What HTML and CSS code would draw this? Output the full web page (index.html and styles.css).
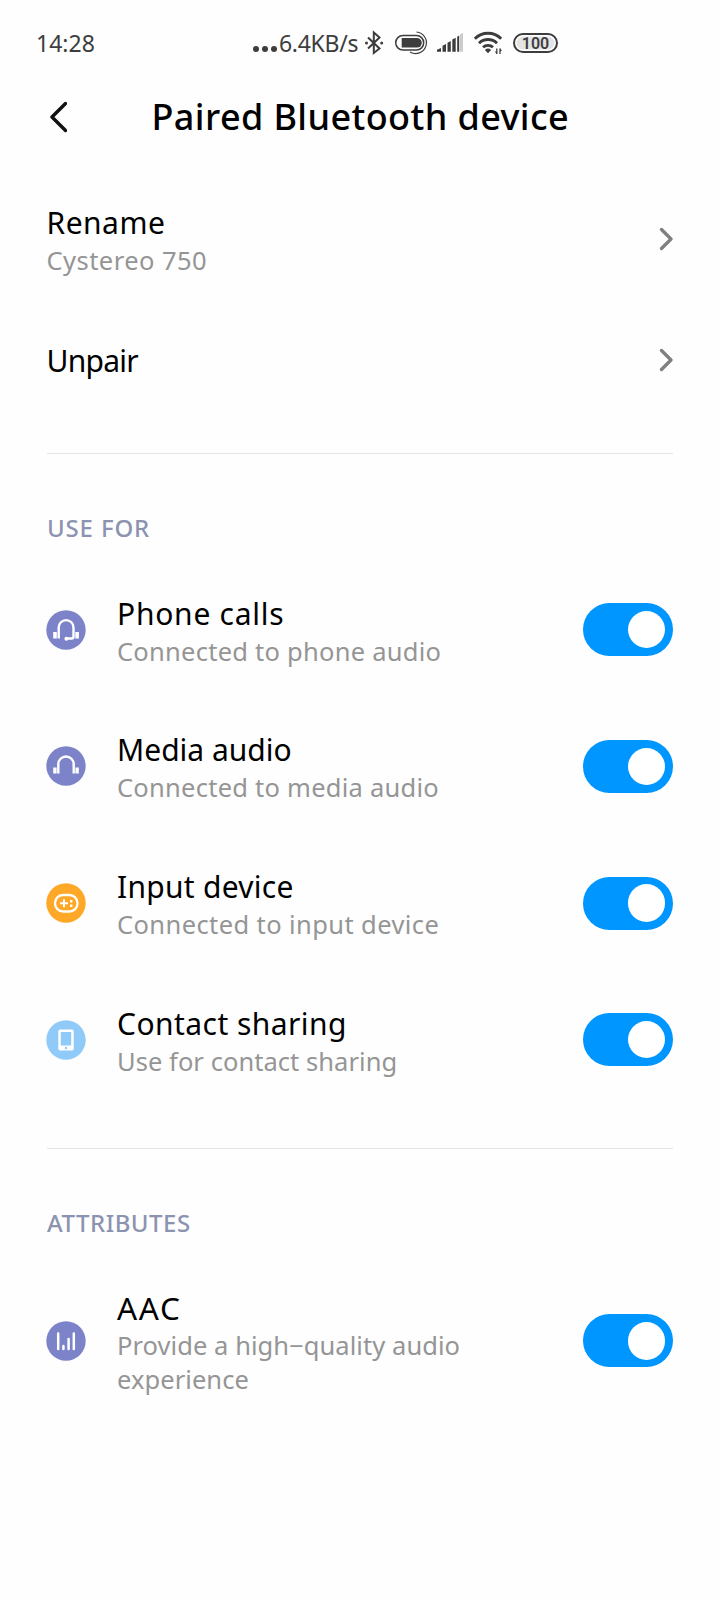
FILE: index.html
```html
<!DOCTYPE html>
<html lang="en">
<head>
<meta charset="utf-8">
<title>Paired Bluetooth device</title>
<link rel="stylesheet" href="styles.css">
</head>
<body>
<div class="screen">
  <div class="statusbar">
    <span class="clock">14:28</span>
    <div class="status">
      <svg class="dots" width="24" height="32" viewBox="0 0 24 32"><g fill="#3d3d3d"><circle cx="3" cy="22" r="3"/><circle cx="12" cy="22" r="3"/><circle cx="21" cy="22" r="3"/></g></svg>
      <span class="speed">6.4KB/s</span>
      <svg class="bt" width="20" height="32" viewBox="364 27 20 32"><path d="M368 37.500 L379.500 48.500 L373.800 53 V32.500 L379.500 37.500 L368 48.500" fill="none" stroke="#3d3d3d" stroke-width="2"/><circle cx="366.500" cy="43" r="1.500" fill="#3d3d3d"/><circle cx="381.700" cy="43" r="1.500" fill="#3d3d3d"/></svg>
      <svg class="batt2" width="34" height="32" viewBox="394 27 34 32"><rect x="395.700" y="35.500" width="28" height="14.500" rx="7.250" fill="none" stroke="#3d3d3d" stroke-width="1.500"/><path d="M401.700 38h15.300a4.800 4.800 0 0 1 0 9.600h-15.300z" fill="#3d3d3d"/><path d="M416.500 32a10.800 10.800 0 1 1-6.500 20" fill="none" stroke="#3d3d3d" stroke-width="1.200"/></svg>
      <svg class="signal" width="28" height="32" viewBox="436 27 28 32"><g fill="#3d3d3d"><path d="M437 51.700v-2l4-1.700v3.700z"/><path d="M442.500 51.700v-6l3.500-1.700v7.700z"/><path d="M447.500 51.700v-9l3.300-1.800v10.800z"/><path d="M452.300 51.700v-12.200l3.400-1.800v14z"/><path d="M457.200 51.700v-15l2-1.200v16.200z"/></g><path d="M460 51.700v-17.200l3-1.700v18.900z" fill="#cbcbcb"/></svg>
      <svg class="wifi" width="30" height="32" viewBox="473 27 30 32"><g fill="none" stroke="#3d3d3d" stroke-width="2.800"><path d="M474.800 38.800a18.500 18.500 0 0 1 26.400 0"/><path d="M479 43.200a12.800 12.800 0 0 1 18 0"/><path d="M483 47.300a7.200 7.200 0 0 1 10 0"/></g><path d="M484.900 50a4.600 4.600 0 0 1 6.200 0l-3.100 3.200z" fill="#3d3d3d"/><path d="M496.800 48.500v5.500M500 48.500v5.500" stroke="#3d3d3d" stroke-width="1.300"/><path d="M494.800 51.500h2v2.800zM502 51h-2v-2.800z" fill="#3d3d3d"/></svg>
      <span class="battery">100</span>
    </div>
  </div>

  <div class="titlebar">
    <svg class="back" width="20" height="34" viewBox="0 0 20 34"><path d="M18.500 3.500 L5 17 L18.500 30.500" fill="none" stroke="#111" stroke-width="3.400" stroke-linecap="round" stroke-linejoin="round"/></svg>
    <h1 class="title">Paired Bluetooth device</h1>
  </div>

  <div class="row">
    <div class="text"><div class="name rename">Rename</div><div class="sub alias">Cystereo 750</div></div>
    <svg class="chev" width="14" height="24" viewBox="0 0 14 24"><path d="M2.500 2.500 L12 12 L2.500 21.500" fill="none" stroke="#808080" stroke-width="3.300" stroke-linecap="round" stroke-linejoin="round"/></svg>
  </div>
  <div class="row short">
    <div class="text"><div class="name unpair">Unpair</div></div>
    <svg class="chev" width="14" height="24" viewBox="0 0 14 24"><path d="M2.500 2.500 L12 12 L2.500 21.500" fill="none" stroke="#808080" stroke-width="3.300" stroke-linecap="round" stroke-linejoin="round"/></svg>
  </div>

  <div class="section use-for">USE FOR</div>
  <div class="row calls">
    <svg class="icon" viewBox="0 0 40 40"><circle cx="20" cy="20" r="19.700" fill="#7c83c8"/><path d="M12.700 28.500V17.500a7.400 7.400 0 0 1 14.800 0v9a2 2 0 0 1-2 2h-5" fill="none" stroke="#fff" stroke-width="2.400"/><circle cx="20.400" cy="28.700" r="2" fill="#fff"/><path d="M7.200 22h3.600v6.500H7.200zM29.300 22h3.600v6.500h-3.600z" fill="#fff"/></svg>
    <div class="text"><div class="name">Phone calls</div><div class="sub">Connected to phone audio</div></div>
    <div class="toggle"><span class="knob"></span></div>
  </div>
  <div class="row media">
    <svg class="icon" viewBox="0 0 40 40"><circle cx="20" cy="20" r="19.700" fill="#7c83c8"/><path d="M12.300 27.500V18.200a7.700 7.700 0 0 1 15.400 0v9.300" fill="none" stroke="#fff" stroke-width="2.400"/><path d="M7.200 21.500h3.400v6H7.200zM29.400 21.500h3.400v6h-3.400z" fill="#fff"/></svg>
    <div class="text"><div class="name">Media audio</div><div class="sub">Connected to media audio</div></div>
    <div class="toggle"><span class="knob"></span></div>
  </div>
  <div class="row input">
    <svg class="icon" viewBox="0 0 40 40"><circle cx="20" cy="20" r="19.700" fill="#ffa726"/><rect x="9" y="12" width="22.500" height="16.500" rx="8" fill="none" stroke="#fff" stroke-width="2.300"/><path d="M14 20.300h8M18 16.300v8" stroke="#fff" stroke-width="2"/><path d="M24 17h2.400v2.400H24zM24 21.500h2.400v2.400H24z" fill="#fff"/></svg>
    <div class="text"><div class="name">Input device</div><div class="sub">Connected to input device</div></div>
    <div class="toggle"><span class="knob"></span></div>
  </div>
  <div class="row contact">
    <svg class="icon" viewBox="0 0 40 40"><circle cx="20" cy="20" r="19.700" fill="#90caf9"/><path fill-rule="evenodd" d="M14 9.500h12a1.700 1.700 0 0 1 1.700 1.700v17.600a1.700 1.700 0 0 1-1.700 1.700h-12a1.700 1.700 0 0 1-1.700-1.700V11.200A1.700 1.700 0 0 1 14 9.500zM14.800 12v13.500h10.400V12z" fill="#fff"/><circle cx="20" cy="28" r="1.200" fill="#90caf9"/></svg>
    <div class="text"><div class="name">Contact sharing</div><div class="sub">Use for contact sharing</div></div>
    <div class="toggle"><span class="knob"></span></div>
  </div>

  <div class="section attributes">ATTRIBUTES</div>
  <div class="row tall aac">
    <svg class="icon" viewBox="0 0 40 40"><circle cx="20" cy="20" r="19.700" fill="#7c83c8"/><path d="M12.200 12.500v15.500M17.400 25v3M22.600 18v10M27.800 12.500v15.500" stroke="#fff" stroke-width="2.500" stroke-linecap="round"/></svg>
    <div class="text"><div class="name">AAC</div><div class="sub">Provide a high−quality audio<br>experience</div></div>
    <div class="toggle"><span class="knob"></span></div>
  </div>
</div>
</body>
</html>
```

FILE: styles.css
```css
* { box-sizing: border-box; }
body { margin: 0; background: #fefefe; font-family: "Noto Sans", sans-serif; color: #000; }
.screen { width: 720px; height: 1600px; overflow: hidden; }
.statusbar { display: flex; height: 86px; padding: 27px 0 0 36px; color: #3d3d3d; font-size: 23px; line-height: 32px; }
.clock { width: 217px; }
.status { display: flex; height: 32px; }
.speed { width: 85px; margin-left: 2px; letter-spacing: -0.3px; }
.batt2 { margin-left: 10px; }
.signal { margin-left: 8px; }
.wifi { margin-left: 9px; }
.battery { width: 45px; height: 20px; margin: 6px 0 0 10px; border: 2px solid #3d3d3d; border-radius: 10px; background: #e4e4e4; box-shadow: inset 0 0 0 1.500px #fff; font: 600 16px/17px Roboto, sans-serif; text-align: center; }
.titlebar { display: flex; align-items: center; height: 84.500px; padding: 0 47px; padding-bottom: 23px; }
.title { margin: 0 0 0 84.500px; font-size: 36px; font-weight: 500; line-height: 48px; letter-spacing: 0.4px; white-space: nowrap; }
.row { display: flex; align-items: center; height: 136.700px; padding: 0 47px 0 46.500px; }
.short { height: 106.600px; }
.tall { height: 170.700px; }
.text { flex: 1; padding-top: 2px; }
.name { font-size: 30px; line-height: 40px; }
.sub { font-size: 25.500px; line-height: 34px; color: #959595; }
.icon { width: 40px; height: 40px; margin: 0 31px 0 -0.500px; flex: none; }
.toggle { display: flex; justify-content: flex-end; align-items: center; width: 90px; height: 53px; padding-right: 7.800px; border-radius: 27px; background: #0096ff; }
.knob { width: 37.500px; height: 37.500px; border-radius: 50%; background: #fff; }
.section { height: 108px; margin: 39.500px 47px 0; padding-top: 58px; border-top: 1px solid #e4e4e4; font-size: 24px; font-weight: 500; line-height: 32px; color: #8c93b0; }

/* Tracking per label */
.rename { letter-spacing: 0.5px; }
.alias { letter-spacing: 0.45px; }
.unpair { letter-spacing: -0.75px; }
.use-for { letter-spacing: 0.85px; }
.attributes { letter-spacing: 0.5px; }
.calls .name { letter-spacing: 0.75px; }
.calls .sub, .media .sub { letter-spacing: 0.25px; }
.input .name { letter-spacing: 0.27px; }
.input .sub { letter-spacing: 0.4px; }
.contact .name { letter-spacing: 0.45px; }
.contact .sub { letter-spacing: 0.05px; }
.aac .name { font-size: 31.500px; letter-spacing: 1.700px; }
.aac .sub { letter-spacing: 0.06px; }
```
